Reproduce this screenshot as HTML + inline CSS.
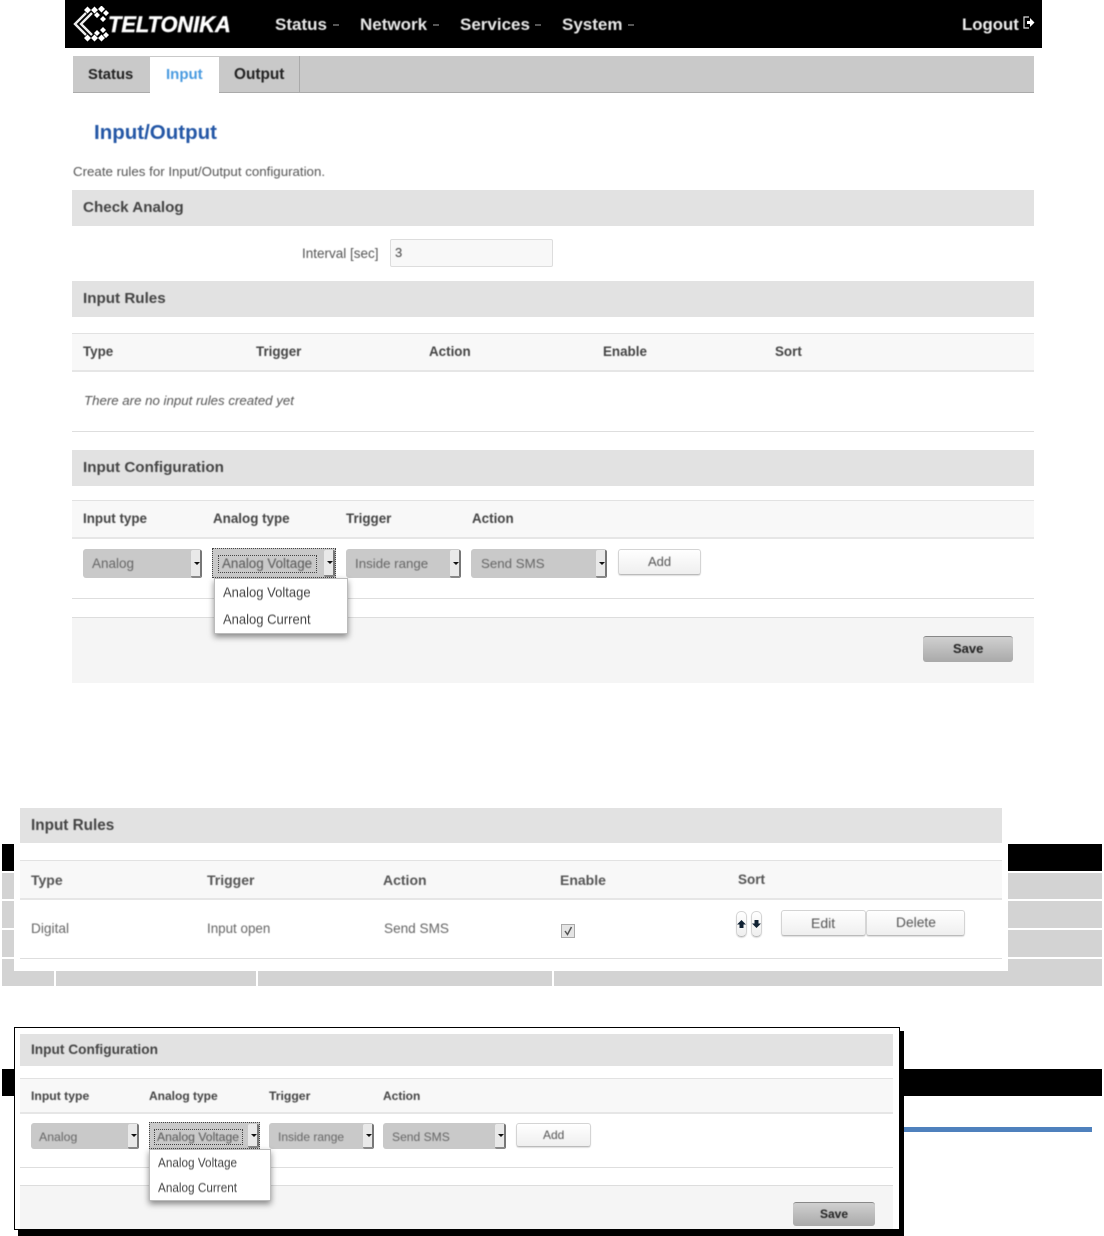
<!DOCTYPE html>
<html><head><meta charset="utf-8"><style>
html,body{margin:0;padding:0;background:#fff}
#p{position:relative;width:1104px;height:1236px;overflow:hidden;background:#fff;font-family:"Liberation Sans",sans-serif;color:#444}
#p div,#p span.t{position:absolute}
.t{white-space:nowrap;line-height:20px;transform:translateY(-50%);filter:blur(.4px)}
.b{font-weight:bold}
.bar{background:#e2e2e2}
.hd{background:#f8f8f8;border-top:1px solid #e2e2e2;border-bottom:2px solid #e6e6e6;box-sizing:border-box}
.ln{height:1px;background:#dedede}
.ft{background:#f5f5f5}
.sel{background:#c9c9c9;border-radius:3px}
.ar{right:0;top:1px;bottom:0;width:11px;background:#e9e9e9;border-right:2px solid #777;border-bottom:2px solid #888;box-sizing:border-box;border-radius:2px}
.ar:after{content:"";position:absolute;left:3px;top:45%;border:3px solid transparent;border-top:3px solid #111;border-bottom:0}
.btn{background:linear-gradient(#fff,#efefef);border:1px solid #d4d4d4;border-bottom:1px solid #bbb;border-radius:3px;box-sizing:border-box;box-shadow:0 1px 1px #ddd}
.save{background:linear-gradient(#d0d0d0,#a9a9a9);border-radius:3px;border-top:1px solid #888;box-sizing:border-box}
.dd{background:#fff;border:1px solid #bbb;box-sizing:border-box;box-shadow:0 3px 6px rgba(0,0,0,.45)}
.foc{border:1px dotted #444;box-sizing:border-box}
.g{background:#d3d3d3}
.k{background:#000}
</style></head><body><div id="p">

<!-- top header -->
<div class="k" style="left:65px;top:0;width:977px;height:48px"></div>
<svg style="position:absolute;left:71px;top:6px" width="42" height="36" viewBox="0 0 42 36">
<g fill="none" stroke="#eee" stroke-width="2.400"><path d="M15 7L4 18L15 29"/><path d="M21 7L10 18L21 29"/></g>
<g fill="#fff"><path d="M13 4l3.500-3.500 3.500 3.500-3.500 3.500zM20 4l3.500-3.500 3.500 3.500-3.500 3.500zM27 3l3.500-3.500 3.500 3.500-3.500 3.500zM32 7l3-3 3 3-3 3zM23 9l3-3 3 3-3 3zM29 13l3-3 3 3-3 3zM13 32l3.500-3.500 3.500 3.500-3.500 3.500zM20 32l3.500-3.500 3.500 3.500-3.500 3.500zM27 32l3.500-3.500 3.500 3.500-3.500 3.500zM32 29l3-3 3 3-3 3zM23 27l3-3 3 3-3 3zM29 24l3-3 3 3-3 3z"/></g></svg>
<span class="t b" style="left:108px;top:25px;color:#fff;font-size:21.800px;font-style:italic;-webkit-text-stroke:.4px #fff">TELTONIKA</span>
<span class="t b" style="left:275px;top:25px;color:#e8e8e8;font-size:17px">Status</span>
<span class="t b" style="left:360px;top:25px;color:#e8e8e8;font-size:17px">Network</span>
<span class="t b" style="left:460px;top:25px;color:#e8e8e8;font-size:17px">Services</span>
<span class="t b" style="left:562px;top:25px;color:#e8e8e8;font-size:17px">System</span>
<div style="left:333px;top:24px;width:6px;height:2px;background:#555"></div>
<div style="left:433px;top:24px;width:6px;height:2px;background:#555"></div>
<div style="left:535px;top:24px;width:6px;height:2px;background:#555"></div>
<div style="left:628px;top:24px;width:6px;height:2px;background:#555"></div>
<span class="t b" style="left:962px;top:25px;color:#eee;font-size:16.800px">Logout</span>
<svg style="position:absolute;left:1022px;top:15px" width="13" height="15" viewBox="0 0 13 15"><path d="M7 2H2V13H7" fill="none" stroke="#ddd" stroke-width="1.200"/><path d="M5 6H8V3L12.500 7.500L8 12V9H5Z" fill="#fff"/></svg>

<!-- tabs -->
<div style="left:73px;top:56px;width:961px;height:37px;background:#c9c9c9;border-bottom:1px solid #aaa;box-sizing:border-box"></div>
<div style="left:150px;top:57px;width:69px;height:37px;background:#fff"></div>
<div style="left:299px;top:56px;width:1px;height:37px;background:#aaa"></div>
<span class="t b" style="left:88px;top:75px;font-size:14.800px;color:#222">Status</span>
<span class="t b" style="left:166px;top:75px;font-size:15px;color:#4a9be0">Input</span>
<span class="t b" style="left:234px;top:75px;font-size:15.400px;color:#222">Output</span>

<span class="t b" style="left:94px;top:133px;font-size:20.500px;color:#2457a6">Input/Output</span>
<span class="t" style="left:73px;top:172px;font-size:13.300px;color:#555">Create rules for Input/Output configuration.</span>

<div class="bar" style="left:72px;top:190px;width:962px;height:36px"></div>
<span class="t b" style="left:83px;top:208px;font-size:15.200px">Check Analog</span>
<span class="t" style="left:302px;top:254px;font-size:13.500px;color:#555">Interval [sec]</span>
<div style="left:390px;top:239px;width:163px;height:28px;background:#f8f8f8;border:1px solid #ddd;box-sizing:border-box;border-radius:2px"></div>
<span class="t" style="left:395px;top:253px;font-size:13px;color:#444">3</span>

<div class="bar" style="left:72px;top:281px;width:962px;height:36px"></div>
<span class="t b" style="left:83px;top:299px;font-size:15.200px">Input Rules</span>
<div class="hd" style="left:72px;top:333px;width:962px;height:39px"></div>
<span class="t b" style="left:83px;top:352px;font-size:13.400px">Type</span>
<span class="t b" style="left:256px;top:352px;font-size:13.400px">Trigger</span>
<span class="t b" style="left:429px;top:352px;font-size:13.400px">Action</span>
<span class="t b" style="left:603px;top:352px;font-size:13.400px">Enable</span>
<span class="t b" style="left:775px;top:352px;font-size:13.400px">Sort</span>
<span class="t" style="left:84px;top:401px;font-size:13.250px;font-style:italic;color:#555">There are no input rules created yet</span>
<div class="ln" style="left:72px;top:431px;width:962px"></div>

<div class="bar" style="left:72px;top:450px;width:962px;height:36px"></div>
<span class="t b" style="left:83px;top:468px;font-size:15.200px">Input Configuration</span>
<div class="hd" style="left:72px;top:500px;width:962px;height:39px"></div>
<span class="t b" style="left:83px;top:519px;font-size:13.400px">Input type</span>
<span class="t b" style="left:213px;top:519px;font-size:13.400px">Analog type</span>
<span class="t b" style="left:346px;top:519px;font-size:13.400px">Trigger</span>
<span class="t b" style="left:472px;top:519px;font-size:13.400px">Action</span>

<div class="sel" style="left:83px;top:549px;width:119px;height:29px"><div class="ar"></div></div>
<span class="t" style="left:92px;top:564px;font-size:13.500px;color:#666">Analog</span>
<div class="foc" style="left:212px;top:548px;width:124px;height:30px;background:#c9c9c9"><div class="ar"></div></div>
<div class="foc" style="left:218px;top:555px;width:99px;height:18px"></div>
<span class="t" style="left:222px;top:564px;font-size:13.400px;color:#555">Analog Voltage</span>
<div class="sel" style="left:346px;top:549px;width:115px;height:29px"><div class="ar"></div></div>
<span class="t" style="left:355px;top:564px;font-size:13.300px;color:#666">Inside range</span>
<div class="sel" style="left:471px;top:549px;width:136px;height:29px"><div class="ar"></div></div>
<span class="t" style="left:481px;top:564px;font-size:13.300px;color:#666">Send SMS</span>
<div class="btn" style="left:618px;top:549px;width:83px;height:26px"></div>
<span class="t" style="left:648px;top:562px;font-size:13px;color:#555">Add</span>

<div class="ln" style="left:72px;top:598px;width:962px"></div>
<div class="ft" style="left:72px;top:617px;width:962px;height:66px;border-top:1px solid #ddd;box-sizing:border-box"></div>
<div class="dd" style="left:214px;top:578px;width:134px;height:56px"></div>
<span class="t" style="left:223px;top:592px;font-size:14px;color:#444;transform:translateY(-50%) scaleX(.93);transform-origin:left">Analog Voltage</span>
<span class="t" style="left:223px;top:619px;font-size:14px;color:#444;transform:translateY(-50%) scaleX(.93);transform-origin:left">Analog Current</span>
<div class="save" style="left:923px;top:636px;width:90px;height:26px"></div>
<span class="t b" style="left:953px;top:649px;font-size:13px;color:#222">Save</span>

<!-- table behind section 2 -->
<div class="k" style="left:2px;top:844px;width:1100px;height:27px"></div>
<div class="g" style="left:2px;top:873px;width:1100px;height:26px"></div>
<div class="g" style="left:2px;top:901px;width:1100px;height:27px"></div>
<div class="g" style="left:2px;top:930px;width:1100px;height:27px"></div>
<div class="g" style="left:2px;top:959px;width:1100px;height:27px"></div>
<div style="left:54px;top:971px;width:2px;height:15px;background:#fff"></div>
<div style="left:256px;top:971px;width:2px;height:15px;background:#fff"></div>
<div style="left:552px;top:971px;width:2px;height:15px;background:#fff"></div>

<!-- section 2 -->
<div style="left:14px;top:800px;width:994px;height:171px;background:#fff"></div>
<div class="bar" style="left:20px;top:808px;width:982px;height:35px"></div>
<span class="t b" style="left:31px;top:826px;font-size:15.300px">Input Rules</span>
<div class="hd" style="left:20px;top:860px;width:982px;height:40px"></div>
<span class="t b" style="left:31px;top:880px;font-size:14px;color:#555">Type</span>
<span class="t b" style="left:207px;top:880px;font-size:14px;color:#555">Trigger</span>
<span class="t b" style="left:383px;top:880px;font-size:14px;color:#555">Action</span>
<span class="t b" style="left:560px;top:880px;font-size:14px;color:#555">Enable</span>
<span class="t b" style="left:738px;top:880px;font-size:13.500px;color:#555">Sort</span>
<span class="t" style="left:31px;top:929px;font-size:13.700px;color:#666">Digital</span>
<span class="t" style="left:207px;top:929px;font-size:13.400px;color:#666">Input open</span>
<span class="t" style="left:384px;top:929px;font-size:13.600px;color:#666">Send SMS</span>
<svg style="position:absolute;left:561px;top:924px" width="14" height="14" viewBox="0 0 14 14"><rect x=".5" y=".5" width="13" height="13" fill="#e4e4e4" stroke="#aaa"/><path d="M4 7L6.500 10.500L10.500 3" fill="none" stroke="#555" stroke-width="1.500"/></svg>
<div class="btn" style="left:736px;top:911px;width:11px;height:26px;border-radius:5px"></div>
<div class="btn" style="left:751px;top:911px;width:11px;height:26px;border-radius:5px"></div>
<svg style="position:absolute;left:737px;top:919px" width="26" height="10" viewBox="0 0 26 10"><path d="M4.500 1L9 5.500H6.500V9H2.500V5.500H0Z" fill="#123"/><path d="M17.500 1H21.500V4.500H24L19.500 9L15 4.500H17.500Z" fill="#123"/></svg>
<div class="btn" style="left:781px;top:910px;width:85px;height:26px"></div>
<div class="btn" style="left:866px;top:910px;width:99px;height:26px"></div>
<span class="t" style="left:811px;top:923px;font-size:14px;color:#555">Edit</span>
<span class="t" style="left:896px;top:923px;font-size:13.800px;color:#555">Delete</span>
<div class="ln" style="left:20px;top:958px;width:982px"></div>

<!-- table behind section 3 -->
<div class="k" style="left:2px;top:1069px;width:1100px;height:27px"></div>
<div style="left:900px;top:1127px;width:192px;height:5px;background:#4f81bd"></div>

<!-- section 3 -->
<div class="k" style="left:18px;top:1031px;width:886px;height:205px"></div>
<div style="left:14px;top:1027px;width:886px;height:203px;background:#fff;border:1px solid #000;box-sizing:border-box"></div>
<div class="bar" style="left:20px;top:1034px;width:873px;height:32px"></div>
<span class="t b" style="left:31px;top:1050px;font-size:13.700px">Input Configuration</span>
<div class="hd" style="left:20px;top:1078px;width:873px;height:36px"></div>
<span class="t b" style="left:31px;top:1096px;font-size:12.200px">Input type</span>
<span class="t b" style="left:149px;top:1096px;font-size:12px">Analog type</span>
<span class="t b" style="left:269px;top:1096px;font-size:12.200px">Trigger</span>
<span class="t b" style="left:383px;top:1096px;font-size:12px">Action</span>

<div class="sel" style="left:31px;top:1123px;width:108px;height:26px"><div class="ar"></div></div>
<span class="t" style="left:39px;top:1137px;font-size:12.300px;color:#666">Analog</span>
<div class="foc" style="left:149px;top:1122px;width:111px;height:27px;background:#c9c9c9"><div class="ar"></div></div>
<div class="foc" style="left:154px;top:1129px;width:89px;height:16px"></div>
<span class="t" style="left:157px;top:1137px;font-size:12.200px;color:#555">Analog Voltage</span>
<div class="sel" style="left:269px;top:1123px;width:105px;height:26px"><div class="ar"></div></div>
<span class="t" style="left:278px;top:1137px;font-size:12px;color:#666">Inside range</span>
<div class="sel" style="left:383px;top:1123px;width:123px;height:26px"><div class="ar"></div></div>
<span class="t" style="left:392px;top:1137px;font-size:12.100px;color:#666">Send SMS</span>
<div class="btn" style="left:516px;top:1123px;width:75px;height:24px"></div>
<span class="t" style="left:543px;top:1135px;font-size:12px;color:#555">Add</span>

<div class="ln" style="left:20px;top:1167px;width:873px"></div>
<div class="ft" style="left:20px;top:1185px;width:873px;height:44px;border-top:1px solid #ddd;box-sizing:border-box"></div>
<div class="dd" style="left:149px;top:1149px;width:122px;height:52px"></div>
<span class="t" style="left:158px;top:1163px;font-size:12.500px;color:#444;transform:translateY(-50%) scaleX(.94);transform-origin:left">Analog Voltage</span>
<span class="t" style="left:158px;top:1188px;font-size:12.500px;color:#444;transform:translateY(-50%) scaleX(.94);transform-origin:left">Analog Current</span>
<div class="save" style="left:793px;top:1202px;width:82px;height:24px"></div>
<span class="t b" style="left:820px;top:1214px;font-size:12px;color:#222">Save</span>

</div></body></html>
